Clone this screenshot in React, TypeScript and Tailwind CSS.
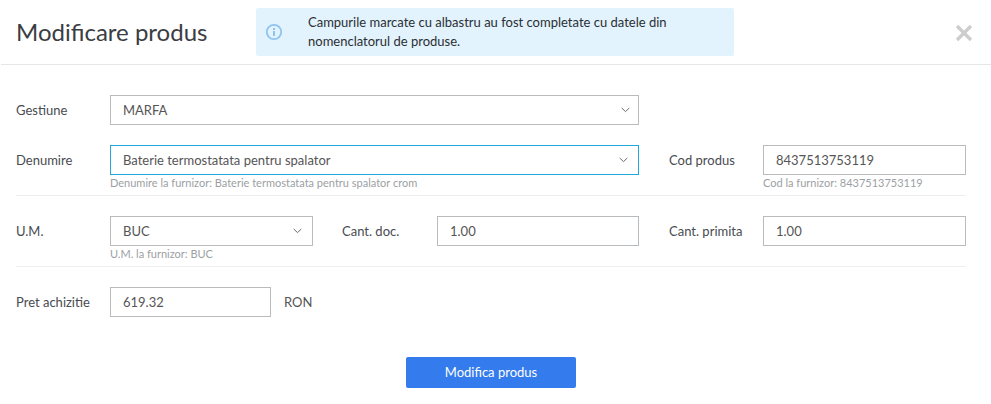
const fieldBox = 'h-[30px] border flex items-center pl-3 text-[13px] text-[#555]';

function Chevron({ className }: { className: string }) {
  return (
    <svg width="9" height="6" viewBox="0 0 9 6" fill="none" className={className}>
      <path d="M0.7 1 L4.5 4.6 L8.3 1" stroke="#6a6c73" strokeWidth="1" />
    </svg>
  );
}

function Select({ value, width, focused, chevronRight }: { value: string; width: string; focused?: boolean; chevronRight: string }) {
  return (
    <div className={`${width} ${fieldBox} justify-between ${focused ? 'border-[#1fa8e0]' : 'border-[#b9bcbf]'}`}>
      <span className="pt-[2px]">{value}</span>
      <Chevron className={chevronRight} />
    </div>
  );
}

function Input({ value, width }: { value: string; width: string }) {
  return (
    <div className={`${width} ${fieldBox} border-[#b9bcbf]`}>
      <span className="pt-[2px]">{value}</span>
    </div>
  );
}

function Label({ text, width }: { text: string; width: string }) {
  return <label className={`${width} shrink-0 pt-[2px] text-[13px] text-[#484b50]`}>{text}</label>;
}

function Hint({ text, className }: { text: string; className: string }) {
  return <div className={`${className} text-[11px] leading-[16px] h-[20px] text-[#9c9fa3]`}>{text}</div>;
}

export default function App() {
  return (
    <div className="w-[991px] h-[404px] bg-white font-['Lato',sans-serif] overflow-hidden">
      <header className="h-[65px] ml-px border-b border-[#e6e6e6] flex items-start">
        <h1 className="ml-[15px] mt-[17px] w-[240px] shrink-0 text-[24px] leading-[30px] text-[#3a3d42]">Modificare produs</h1>
        <div className="mt-2 w-[478px] h-12 bg-[#e2f3fd] rounded-[2px] flex items-center">
          <svg width="18" height="18" viewBox="0 0 18 18" fill="none" className="ml-[9px] shrink-0">
            <circle cx="9" cy="9" r="7.2" stroke="#8fc3f2" strokeWidth="1.8" />
            <rect x="8" y="8" width="2" height="5" fill="#8fc3f2" />
            <rect x="8" y="5" width="2" height="2" fill="#8fc3f2" />
          </svg>
          <p className="ml-[25px] text-[13px] leading-[19px] text-[#2b2e33] w-[400px]">
            Campurile marcate cu albastru au fost completate cu datele din nomenclatorul de produse.
          </p>
        </div>
        <svg width="18" height="18" viewBox="0 0 18 18" className="ml-[221px] mt-[24px]" fill="none">
          <path d="M2 2 L16 16 M16 2 L2 16" stroke="#cdcdcd" strokeWidth="3.4" />
        </svg>
      </header>

      <main className="pl-4 pr-[25px] pt-[30px]">
        <div className="flex items-center">
          <Label text="Gestiune" width="w-[94px]" />
          <Select value="MARFA" width="w-[529px]" chevronRight="mr-[8px]" />
        </div>

        <div className="flex items-center mt-5">
          <Label text="Denumire" width="w-[94px]" />
          <Select value="Baterie termostatata pentru spalator" width="w-[529px]" focused chevronRight="mr-[10px]" />
          <Label text="Cod produs" width="w-[94px] ml-[30px]" />
          <Input value="8437513753119" width="w-[203px]" />
        </div>
        <div className="flex border-b border-[#eeeeee] h-[21px]">
          <Hint text="Denumire la furnizor: Baterie termostatata pentru spalator crom" className="ml-[94px] w-[653px]" />
          <Hint text="Cod la furnizor: 8437513753119" className="" />
        </div>

        <div className="flex items-center mt-5">
          <Label text="U.M." width="w-[94px]" />
          <Select value="BUC" width="w-[203px]" chevronRight="mr-[10px]" />
          <Label text="Cant. doc." width="w-[95px] ml-[29px]" />
          <Input value="1.00" width="w-[202px]" />
          <Label text="Cant. primita" width="w-[94px] ml-[30px]" />
          <Input value="1.00" width="w-[203px]" />
        </div>
        <div className="border-b border-[#eeeeee] h-[21px]">
          <Hint text="U.M. la furnizor: BUC" className="ml-[94px]" />
        </div>

        <div className="flex items-center mt-5">
          <Label text="Pret achizitie" width="w-[94px]" />
          <Input value="619.32" width="w-[161px]" />
          <span className="ml-[13px] pt-[2px] text-[13px] text-[#555]">RON</span>
        </div>

        <div className="flex mt-10 ml-[390px]">
          <button className="w-[170px] h-[31px] rounded-[2px] bg-[#347bed] text-white text-[13px]">Modifica produs</button>
        </div>
      </main>
    </div>
  );
}
